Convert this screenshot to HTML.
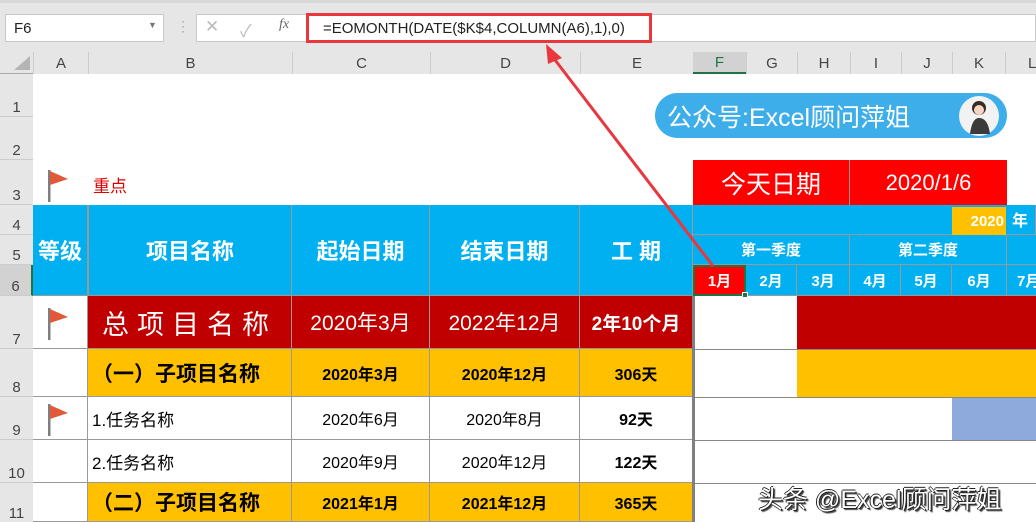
<!DOCTYPE html>
<html><head><meta charset="utf-8"><style>
*{margin:0;padding:0;box-sizing:border-box}
body{width:1036px;height:522px;overflow:hidden;background:#fff;position:relative;font-family:"Liberation Sans","Noto Sans CJK SC",sans-serif}
.a{position:absolute;display:flex;align-items:center;justify-content:center;white-space:nowrap}
.hd{color:#444;font-size:15px;background:#e6e6e6}
.bl{background:#00b0f0;color:#fff;font-weight:bold}
.c{border-right:1px solid #999;border-bottom:1px solid #999}
</style></head><body>
<!-- toolbar -->
<div class="a" style="left:0;top:0;width:1036px;height:52px;background:#e6e6e6;border-top:3px solid #d8d8d8"></div>
<div class="a" style="left:5px;top:14px;width:159px;height:28px;background:#fff;border:1px solid #c8c8c8;justify-content:flex-start;padding-left:8px;font-size:15px;color:#222">F6</div>
<div class="a" style="left:148px;top:20px;font-size:9px;color:#777">▼</div>
<div class="a" style="left:176px;top:18px;font-size:14px;color:#aaa">⋮</div>
<div class="a" style="left:196px;top:14px;width:840px;height:28px;background:#fff;border:1px solid #c8c8c8"></div>
<div class="a" style="left:205px;top:17px;font-size:17px;color:#bbb">✕</div>
<div class="a" style="left:240px;top:17px;font-size:17px;color:#bbb">✓</div>
<div class="a" style="left:279px;top:17px;font-size:14px;color:#666;font-style:italic;font-family:'Liberation Serif',serif">fx</div>
<div class="a" style="left:306px;top:13px;width:346px;height:30px;border:3px solid #e8383d;background:#fff;justify-content:flex-start;padding-left:14px;font-size:15px;color:#222">=EOMONTH(DATE($K$4,COLUMN(A6),1),0)</div>
<!-- column headers -->
<div class="a hd" style="left:0;top:52px;width:1036px;height:22px;border-bottom:1px solid #aaa"></div>
<div class="a" style="left:14px;top:56px;width:0;height:0;border-left:16px solid transparent;border-bottom:14px solid #b5b5b5"></div>
<div class="a hd" style="left:33px;top:52px;width:55px;height:22px;border-left:1px solid #ccc">A</div>
<div class="a hd" style="left:88px;top:52px;width:204px;height:22px;border-left:1px solid #ccc">B</div>
<div class="a hd" style="left:292px;top:52px;width:138px;height:22px;border-left:1px solid #ccc">C</div>
<div class="a hd" style="left:430px;top:52px;width:150px;height:22px;border-left:1px solid #ccc">D</div>
<div class="a hd" style="left:580px;top:52px;width:113px;height:22px;border-left:1px solid #ccc">E</div>
<div class="a hd" style="left:693px;top:52px;width:53px;height:22px;background:#d2d2d2;border-bottom:2px solid #217346;color:#217346">F</div>
<div class="a hd" style="left:746px;top:52px;width:51px;height:22px;border-left:1px solid #ccc">G</div>
<div class="a hd" style="left:797px;top:52px;width:53px;height:22px;border-left:1px solid #ccc">H</div>
<div class="a hd" style="left:850px;top:52px;width:51px;height:22px;border-left:1px solid #ccc">I</div>
<div class="a hd" style="left:901px;top:52px;width:51px;height:22px;border-left:1px solid #ccc">J</div>
<div class="a hd" style="left:952px;top:52px;width:53px;height:22px;border-left:1px solid #ccc">K</div>
<div class="a hd" style="left:1005px;top:52px;width:40px;height:22px;border-left:1px solid #ccc;justify-content:flex-start;padding-left:22px">L</div>
<!-- row headers -->
<div class="a hd" style="left:0;top:74px;width:33px;height:448px;border-right:1px solid #aaa"></div>
<div class="a hd" style="left:0;top:74px;width:33px;height:43px;align-items:flex-end;border-bottom:1px solid #ccc">1</div>
<div class="a hd" style="left:0;top:117px;width:33px;height:43px;align-items:flex-end;border-bottom:1px solid #ccc">2</div>
<div class="a hd" style="left:0;top:160px;width:33px;height:45px;align-items:flex-end;border-bottom:1px solid #ccc">3</div>
<div class="a hd" style="left:0;top:205px;width:33px;height:30px;align-items:flex-end;border-bottom:1px solid #ccc">4</div>
<div class="a hd" style="left:0;top:235px;width:33px;height:30px;align-items:flex-end;border-bottom:1px solid #ccc">5</div>
<div class="a hd" style="left:0;top:265px;width:33px;height:31px;align-items:flex-end;background:#d2d2d2;border-right:2px solid #217346;border-bottom:1px solid #ccc">6</div>
<div class="a hd" style="left:0;top:296px;width:33px;height:53px;align-items:flex-end;border-bottom:1px solid #ccc">7</div>
<div class="a hd" style="left:0;top:349px;width:33px;height:48px;align-items:flex-end;border-bottom:1px solid #ccc">8</div>
<div class="a hd" style="left:0;top:397px;width:33px;height:43px;align-items:flex-end;border-bottom:1px solid #ccc">9</div>
<div class="a hd" style="left:0;top:440px;width:33px;height:43px;align-items:flex-end;border-bottom:1px solid #ccc">10</div>
<div class="a hd" style="left:0;top:483px;width:33px;height:39px;align-items:flex-end">11</div>
<!-- row 3 -->
<svg class="a" style="left:44px;top:168px" width="30" height="36"><rect x="4" y="2" width="2.5" height="32" fill="#7f7f7f"/><path d="M6 3 L24 11 L6 17Z" fill="#e05a3a"/></svg>
<div class="a" style="left:93px;top:172px;font-size:17px;color:#e00000">重点</div>
<!-- logo -->
<div class="a" style="left:655px;top:93px;width:352px;height:45px;border-radius:23px;background:#3daee9;justify-content:flex-start;padding-left:12px;color:#fff;font-size:25px">公众号:Excel顾问萍姐</div>
<div class="a" style="left:959px;top:96px;width:40px;height:40px;border-radius:50%;background:#f2f2f2"><svg width="34" height="36"><circle cx="17" cy="10" r="7" fill="#3a2a22"/><circle cx="17" cy="12" r="5" fill="#f3d5c2"/><path d="M8 36 Q10 20 17 20 Q26 20 28 36Z" fill="#3b3b3b"/></svg></div>
<!-- today -->
<div class="a" style="left:693px;top:160px;width:157px;height:45px;background:#ff0000;color:#fff;font-size:25px;border-right:1px solid #999">今天日期</div>
<div class="a" style="left:850px;top:160px;width:157px;height:45px;background:#ff0000;color:#fff;font-size:22px">2020/1/6</div>
<!-- header blue -->
<div class="a bl c" style="left:33px;top:205px;width:55px;height:91px;font-size:22px">等级</div>
<div class="a bl c" style="left:88px;top:205px;width:204px;height:91px;font-size:22px;border-left:1px solid #999">项目名称</div>
<div class="a bl c" style="left:292px;top:205px;width:138px;height:91px;font-size:22px">起始日期</div>
<div class="a bl c" style="left:430px;top:205px;width:150px;height:91px;font-size:22px">结束日期</div>
<div class="a bl c" style="left:580px;top:205px;width:113px;height:91px;font-size:22px">工 期</div>
<div class="a bl c" style="left:693px;top:205px;width:343px;height:30px"></div>
<div class="a" style="left:952px;top:207px;width:54px;height:28px;background:#ffc000;color:#fff;font-weight:bold;font-size:15px;justify-content:flex-end;padding-right:2px">2020</div>
<div class="a bl" style="left:1012px;top:207px;font-size:16px">年</div>
<div class="a bl c" style="left:693px;top:235px;width:157px;height:30px;font-size:15px">第一季度</div>
<div class="a bl c" style="left:850px;top:235px;width:157px;height:30px;font-size:15px">第二季度</div>
<div class="a bl c" style="left:1007px;top:235px;width:40px;height:30px"></div>
<div class="a bl c" style="left:746px;top:265px;width:51px;height:31px;font-size:15px">2月</div>
<div class="a bl c" style="left:797px;top:265px;width:53px;height:31px;font-size:15px">3月</div>
<div class="a bl c" style="left:850px;top:265px;width:51px;height:31px;font-size:15px">4月</div>
<div class="a bl c" style="left:901px;top:265px;width:51px;height:31px;font-size:15px">5月</div>
<div class="a bl c" style="left:952px;top:265px;width:55px;height:31px;font-size:15px">6月</div>
<div class="a bl c" style="left:1007px;top:265px;width:40px;height:31px;font-size:15px;justify-content:flex-start;padding-left:10px">7月</div>
<div class="a" style="left:693px;top:265px;width:53px;height:31px;background:#ff0000;color:#fff;font-weight:bold;font-size:15px;border:2px solid #217346">1月</div>
<div class="a" style="left:742px;top:292px;width:6px;height:6px;background:#217346;border:1px solid #fff"></div>
<!-- row 7 -->
<svg class="a" style="left:44px;top:306px" width="30" height="36"><rect x="4" y="2" width="2.5" height="32" fill="#7f7f7f"/><path d="M6 3 L24 11 L6 17Z" fill="#e05a3a"/></svg>
<div class="a c" style="left:33px;top:296px;width:55px;height:53px;border-right:1px solid #999"></div>
<div class="a c" style="left:88px;top:296px;width:204px;height:53px;background:#c00000;color:#fff;font-size:27px;letter-spacing:8px">总项目名称</div>
<div class="a c" style="left:292px;top:296px;width:138px;height:53px;background:#c00000;color:#fff;font-size:21px">2020年3月</div>
<div class="a c" style="left:430px;top:296px;width:150px;height:53px;background:#c00000;color:#fff;font-size:21px">2022年12月</div>
<div class="a c" style="left:580px;top:296px;width:113px;height:53px;background:#c00000;color:#fff;font-size:19px;font-weight:bold">2年10个月</div>
<div class="a" style="left:797px;top:296px;width:239px;height:53px;background:#c00000"></div>
<!-- row 8 -->
<div class="a c" style="left:33px;top:349px;width:55px;height:48px"></div>
<div class="a c" style="left:88px;top:349px;width:204px;height:48px;background:#ffc000;font-size:21px;font-weight:bold;justify-content:flex-start;padding-left:4px">（一）子项目名称</div>
<div class="a c" style="left:292px;top:349px;width:138px;height:48px;background:#ffc000;font-size:16px;font-weight:bold">2020年3月</div>
<div class="a c" style="left:430px;top:349px;width:150px;height:48px;background:#ffc000;font-size:16px;font-weight:bold">2020年12月</div>
<div class="a c" style="left:580px;top:349px;width:113px;height:48px;background:#ffc000;font-size:16px;font-weight:bold">306天</div>
<div class="a" style="left:797px;top:349px;width:239px;height:48px;background:#ffc000"></div>
<!-- row 9 -->
<svg class="a" style="left:44px;top:402px" width="30" height="36"><rect x="4" y="2" width="2.5" height="32" fill="#7f7f7f"/><path d="M6 3 L24 11 L6 17Z" fill="#e05a3a"/></svg>
<div class="a c" style="left:33px;top:397px;width:55px;height:43px"></div>
<div class="a c" style="left:88px;top:397px;width:204px;height:43px;font-size:17px;justify-content:flex-start;padding-left:4px">1.任务名称</div>
<div class="a c" style="left:292px;top:397px;width:138px;height:43px;font-size:16px">2020年6月</div>
<div class="a c" style="left:430px;top:397px;width:150px;height:43px;font-size:16px">2020年8月</div>
<div class="a c" style="left:580px;top:397px;width:113px;height:43px;font-size:16px;font-weight:bold">92天</div>
<div class="a" style="left:952px;top:397px;width:84px;height:43px;background:#8ea9db"></div>
<!-- row 10 -->
<div class="a c" style="left:33px;top:440px;width:55px;height:43px"></div>
<div class="a c" style="left:88px;top:440px;width:204px;height:43px;font-size:17px;justify-content:flex-start;padding-left:4px">2.任务名称</div>
<div class="a c" style="left:292px;top:440px;width:138px;height:43px;font-size:16px">2020年9月</div>
<div class="a c" style="left:430px;top:440px;width:150px;height:43px;font-size:16px">2020年12月</div>
<div class="a c" style="left:580px;top:440px;width:113px;height:43px;font-size:16px;font-weight:bold">122天</div>
<!-- row 11 -->
<div class="a c" style="left:33px;top:483px;width:55px;height:39px"></div>
<div class="a c" style="left:88px;top:483px;width:204px;height:39px;background:#ffc000;font-size:21px;font-weight:bold;justify-content:flex-start;padding-left:4px">（二）子项目名称</div>
<div class="a c" style="left:292px;top:483px;width:138px;height:39px;background:#ffc000;font-size:16px;font-weight:bold">2021年1月</div>
<div class="a c" style="left:430px;top:483px;width:150px;height:39px;background:#ffc000;font-size:16px;font-weight:bold">2021年12月</div>
<div class="a c" style="left:580px;top:483px;width:113px;height:39px;background:#ffc000;font-size:16px;font-weight:bold">365天</div>
<!-- gantt lines -->
<div class="a" style="left:693px;top:349px;width:343px;height:1px;background:#888"></div>
<div class="a" style="left:693px;top:397px;width:343px;height:1px;background:#888"></div>
<div class="a" style="left:693px;top:440px;width:343px;height:1px;background:#888"></div>
<div class="a" style="left:693px;top:483px;width:343px;height:1px;background:#888"></div>
<div class="a" style="left:692px;top:296px;width:3px;height:226px;background:#808080"></div>
<!-- watermark -->
<div class="a" style="left:758px;top:480px;font-size:25px;color:#fff;text-shadow:1px 1px 0 #222,-1px 0 0 #222,0 -1px 0 #222,2px 2px 1px #444">头条 @Excel顾问萍姐</div>
<!-- arrow -->
<svg class="a" style="left:0;top:0" width="1036" height="522"><line x1="713" y1="266" x2="552" y2="56" stroke="#e8383d" stroke-width="3"/><path d="M546 44 L562 58 L548 64Z" fill="#e8383d"/></svg>
</body></html>
